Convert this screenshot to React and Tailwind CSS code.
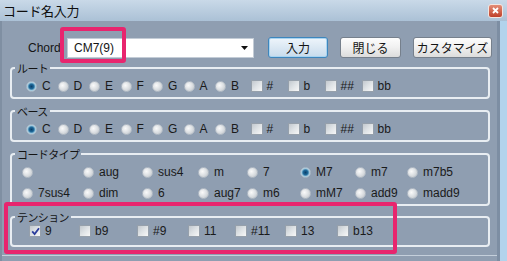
import React from "react";

const FONT = "font-['Liberation_Sans','Noto_Sans_CJK_JP',sans-serif]";

function Radio({ checked }) {
  return (
    <span
      className={
        "block w-[11px] h-[11px] shrink-0 rounded-full border " +
        (checked
          ? "border-[#a8b8c6] bg-[radial-gradient(circle_at_50%_50%,#0b3f6a_0%,#1f6b9c_38%,#9ec8de_62%,#e6ecf0_85%)]"
          : "border-[#b3bcc6] bg-[radial-gradient(circle_at_38%_38%,#fafafa_0%,#dfe2e5_45%,#bcc2c8_100%)]")
      }
    />
  );
}

function Check({ checked }) {
  return (
    <span className="flex w-[12px] h-[12px] shrink-0 items-center justify-center border border-[#96a0ab] bg-gradient-to-br from-[#c3c9cf] via-[#dfe3e6] to-[#f7f7f7]">
      {checked && (
        <svg width="9" height="9" viewBox="0 0 9 9">
          <path d="M1.2 4.3 L3.6 7 L8 1.2" stroke="#2a3c9c" strokeWidth="1.8" fill="none" />
        </svg>
      )}
    </span>
  );
}

function RItem({ label, checked, w }) {
  return (
    <div className={"flex items-center gap-[5px] h-[14px] " + w}>
      <Radio checked={checked} />
      <span className="text-[12px] leading-[14px] text-[#1a1a1a]">{label}</span>
    </div>
  );
}

function CItem({ label, checked, w, gap = "gap-[4px]" }) {
  return (
    <div className={"flex items-center h-[14px] " + gap + " " + w}>
      <Check checked={checked} />
      <span className="text-[12px] leading-[14px] text-[#1a1a1a]">{label}</span>
    </div>
  );
}

function Group({ title, className, children }) {
  return (
    <fieldset
      className={
        "ml-[8px] w-[480px] border-2 border-[#e8edf2] rounded-[4px] pl-[3px] pr-0 " + className
      }
    >
      <legend className="px-[2px] text-[11px] leading-[12px] tracking-[-0.6px] text-[#141414] font-['Noto_Sans_CJK_JP',sans-serif]">
        {title}
      </legend>
      {children}
    </fieldset>
  );
}

function Btn({ children, w, focused }) {
  return (
    <div
      className={
        "flex h-[21px] items-center justify-center rounded-[3px] border text-[12px] leading-[14px] text-[#141414] font-['Noto_Sans_CJK_JP',sans-serif] " +
        w +
        " " +
        (focused
          ? "border-[#3d86bd] bg-gradient-to-b from-[#eef5fb] via-[#dbe8f3] to-[#c7dbec] shadow-[inset_0_0_0_1px_#a9d4f0]"
          : "border-[#76808c] bg-gradient-to-b from-[#fdfdfd] via-[#f0f0f0] to-[#dcdcdc]")
      }
    >
      {children}
    </div>
  );
}

export default function App() {
  const roots = ["C", "D", "E", "F", "G", "A", "B"];
  const accs = ["#", "b", "##", "bb"];
  const types1 = ["", "aug", "sus4", "m", "7", "M7", "m7", "m7b5"];
  const types2 = ["7sus4", "dim", "6", "aug7", "m6", "mM7", "add9", "madd9"];
  const typeW = [
    "w-[61px]",
    "w-[59px]",
    "w-[56px]",
    "w-[49px]",
    "w-[53px]",
    "w-[55px]",
    "w-[52px]",
    "w-[60px]",
  ];
  const tens = ["9", "b9", "#9", "11", "#11", "13", "b13"];
  const tensW = [
    "w-[50px]",
    "w-[58px]",
    "w-[51px]",
    "w-[47px]",
    "w-[50px]",
    "w-[52px]",
    "w-[50px]",
  ];

  return (
    <div className={"relative w-[507px] h-[261px] overflow-hidden bg-[#8f9eb1] " + FONT}>
      {/* title bar */}
      <div className="flex h-[21px] items-center justify-between bg-gradient-to-b from-[#c9d9e8] to-[#abc1d6]">
        <span className="pl-[3px] text-[13px] leading-[16px] text-[#0e0e0e] font-['Noto_Sans_CJK_JP',sans-serif] tracking-[-0.3px]">
          コード名入力
        </span>
        <div className="mr-[4px] flex h-[14px] w-[15px] items-center justify-center rounded-[3px] border border-[#f1e6e2] bg-gradient-to-b from-[#e38c76] to-[#bf3f29]">
          <svg width="7" height="7" viewBox="0 0 7 7">
            <path d="M1 1 L6 6 M6 1 L1 6" stroke="#ffffff" strokeWidth="1.8" />
          </svg>
        </div>
      </div>

      <div className="flex h-[240px]">
        <div className="flex w-[497px] flex-col border-l-2 border-[#7f8fa2]">
          <div className="h-[234px]">
            {/* chord row */}
            <div className="mt-[16px] flex items-center pl-[26px]">
              <span className="text-[12px] leading-[14px] text-[#141414]">Chord:</span>
              <div className="ml-[3px] flex h-[20px] w-[187px] items-center justify-between border border-[#c3ccd6] bg-white pl-[6px] pr-[5px]">
                <span className="text-[12px] leading-[14px] text-[#141414]">CM7(9)</span>
                <svg width="7" height="4" viewBox="0 0 7 4">
                  <path d="M0 0 L7 0 L3.5 4 Z" fill="#111" />
                </svg>
              </div>
              <div className="ml-[14px]">
                <Btn w="w-[60px]" focused>
                  入力
                </Btn>
              </div>
              <div className="ml-[12px]">
                <Btn w="w-[61px]">閉じる</Btn>
              </div>
              <div className="ml-[12px]">
                <Btn w="w-[79px]">カスタマイズ</Btn>
              </div>
            </div>

            <Group title="ルート" className="mt-[4px] pb-[4px]">
              <div className="flex pl-[11px] pt-[5px]">
                {roots.map((r, i) => (
                  <RItem key={r} label={r} checked={i === 0} w="w-[31.5px]" />
                ))}
                <div className="ml-[4px] flex">
                  {accs.map((a) => (
                    <CItem key={a} label={a} w="w-[37px]" />
                  ))}
                </div>
              </div>
            </Group>

            <Group title="ベース" className="mt-[6px] pb-[4px]">
              <div className="flex pl-[11px] pt-[5px]">
                {roots.map((r, i) => (
                  <RItem key={r} label={r} checked={i === 0} w="w-[31.5px]" />
                ))}
                <div className="ml-[4px] flex">
                  {accs.map((a) => (
                    <CItem key={a} label={a} w="w-[37px]" />
                  ))}
                </div>
              </div>
            </Group>

            <Group title="コードタイプ" className="mt-[6px] pb-[4px]">
              <div className="flex flex-col gap-[7px] pl-[7px] pt-[5px]">
                <div className="flex">
                  {types1.map((t, i) => (
                    <RItem key={"a" + i} label={t} checked={t === "M7"} w={typeW[i]} />
                  ))}
                </div>
                <div className="flex">
                  {types2.map((t, i) => (
                    <RItem key={"b" + i} label={t} w={typeW[i]} />
                  ))}
                </div>
              </div>
            </Group>

            <Group title="テンション" className="mt-[5px] pb-[7px]">
              <div className="flex pl-[14px] pt-[1px]">
                {tens.map((t, i) => (
                  <CItem key={t} label={t} checked={i === 0} w={tensW[i]} gap="gap-[4px]" />
                ))}
              </div>
            </Group>
          </div>
          <div className="h-[1px] bg-[#c4cfdb]" />
        </div>
        <div className="w-[3px] bg-[#7d8ea3]" />
        <div className="flex-1 bg-[#b2d3ec]" />
      </div>

      {/* annotation highlights */}
      <div className="absolute left-[60px] top-[27px] h-[36px] w-[66px] rounded-[3px] border-4 border-[#e8256e]" />
      <div className="absolute left-[4px] top-[202px] h-[52px] w-[393px] rounded-[3px] border-4 border-[#e8256e]" />
    </div>
  );
}
